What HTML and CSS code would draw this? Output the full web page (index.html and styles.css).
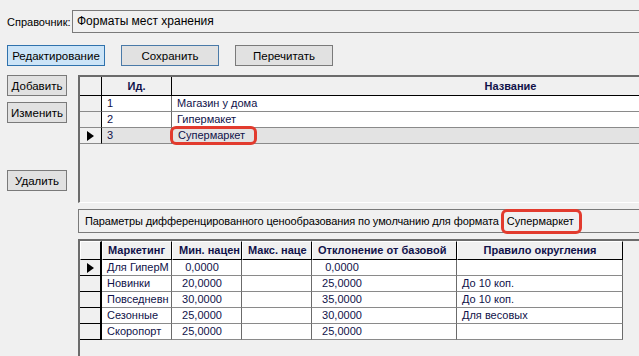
FILE: index.html
```html
<!DOCTYPE html>
<html lang="ru">
<head>
    <meta charset="UTF-8">
    <title>Справочник: Форматы мест хранения</title>
    <link rel="stylesheet" href="styles.css">
</head>
<body>
    <div class="form">
        <div class="ref-row">
            <label class="ref-label">Справочник:</label>
            <div class="ref-box">Форматы мест хранения</div>
        </div>

        <div class="toolbar">
            <button class="btn btn-active">Редактирование</button>
            <button class="btn btn-focus">Сохранить</button>
            <button class="btn">Перечитать</button>
        </div>

        <div class="main">
            <div class="side">
                <button class="btn btn-side">Добавить</button>
                <button class="btn btn-side btn-change">Изменить</button>
                <button class="btn btn-side btn-delete">Удалить</button>
            </div>

            <div class="content">
                <div class="grid grid-formats">
                    <div class="g-row g-head">
                        <div class="c c-ind"></div>
                        <div class="c c-id center">Ид.</div>
                        <div class="c c-name center">Название</div>
                    </div>
                    <div class="g-row">
                        <div class="c c-ind"></div>
                        <div class="c c-id">1</div>
                        <div class="c c-name">Магазин у дома</div>
                    </div>
                    <div class="g-row">
                        <div class="c c-ind"></div>
                        <div class="c c-id">2</div>
                        <div class="c c-name">Гипермакет</div>
                    </div>
                    <div class="g-row selected">
                        <div class="c c-ind">
                            <svg class="arrow" width="7" height="10" viewBox="0 0 7 10"><polygon points="0,0 7,5 0,10"/></svg>
                        </div>
                        <div class="c c-id">3</div>
                        <div class="c c-name"><span class="mark mark-cell">Супермаркет</span></div>
                    </div>
                </div>

                <div class="params">
                    <span class="params-text">Параметры дифференцированного ценообразования по умолчанию для формата</span>
                    <span class="mark mark-inline">Супермаркет</span>
                </div>

                <div class="grid grid-params">
                    <div class="g-row g-head">
                        <div class="c c-ind"></div>
                        <div class="c c-mk">Маркетинг</div>
                        <div class="c c-min">Мин. нацен</div>
                        <div class="c c-max">Макс. наце</div>
                        <div class="c c-dev">Отклонение от базовой</div>
                        <div class="c c-rule center">Правило округления</div>
                    </div>
                    <div class="g-row">
                        <div class="c c-ind">
                            <svg class="arrow" width="7" height="10" viewBox="0 0 7 10"><polygon points="0,0 7,5 0,10"/></svg>
                        </div>
                        <div class="c c-mk">Для ГиперМ</div>
                        <div class="c c-min"><span class="num">0,0000</span></div>
                        <div class="c c-max"></div>
                        <div class="c c-dev"><span class="num">0,0000</span></div>
                        <div class="c c-rule"></div>
                    </div>
                    <div class="g-row">
                        <div class="c c-ind"></div>
                        <div class="c c-mk">Новинки</div>
                        <div class="c c-min"><span class="num">20,0000</span></div>
                        <div class="c c-max"></div>
                        <div class="c c-dev"><span class="num">25,0000</span></div>
                        <div class="c c-rule">До 10 коп.</div>
                    </div>
                    <div class="g-row">
                        <div class="c c-ind"></div>
                        <div class="c c-mk">Повседневн</div>
                        <div class="c c-min"><span class="num">30,0000</span></div>
                        <div class="c c-max"></div>
                        <div class="c c-dev"><span class="num">35,0000</span></div>
                        <div class="c c-rule">До 10 коп.</div>
                    </div>
                    <div class="g-row">
                        <div class="c c-ind"></div>
                        <div class="c c-mk">Сезонные</div>
                        <div class="c c-min"><span class="num">25,0000</span></div>
                        <div class="c c-max"></div>
                        <div class="c c-dev"><span class="num">30,0000</span></div>
                        <div class="c c-rule">Для весовых</div>
                    </div>
                    <div class="g-row">
                        <div class="c c-ind"></div>
                        <div class="c c-mk">Скоропорт</div>
                        <div class="c c-min"><span class="num">25,0000</span></div>
                        <div class="c c-max"></div>
                        <div class="c c-dev"><span class="num">25,0000</span></div>
                        <div class="c c-rule"></div>
                    </div>
                </div>
            </div>
        </div>
    </div>
</body>
</html>
```

FILE: styles.css
```css
html, body {
    margin: 0;
    height: 100%;
    overflow: hidden;
}
body {
    background: #f0f0f0;
    font-family: "Liberation Sans", Arial, sans-serif;
    font-size: 11px;
    color: #000;
}
.form {
    padding-top: 10px;
    overflow: hidden;
}
.ref-row {
    display: flex;
    align-items: center;
    height: 23px;
}
.ref-label {
    width: 72px;
    flex: none;
    padding-left: 7px;
    box-sizing: border-box;
    font-size: 11px;
}
.ref-box {
    flex: 1;
    height: 23px;
    box-sizing: border-box;
    border: 1px solid #7a7a7a;
    border-right: none;
    padding: 3px 4px;
    font-size: 12px;
}
.toolbar {
    display: flex;
    gap: 16px;
    margin-top: 12px;
    padding-left: 7px;
}
.btn {
    width: 98px;
    height: 21px;
    box-sizing: border-box;
    border: 1px solid #7a7a7a;
    background: #e1e1e1;
    font-family: "Liberation Sans", Arial, sans-serif;
    font-size: 11.5px;
    color: #000;
    padding: 0;
}
.btn-active {
    background: #cce4f7;
    border-color: #2f72ad;
}
.btn-focus {
    border-color: #4a7aa8;
}
.main {
    display: flex;
    margin-top: 9px;
}
.side {
    width: 78px;
    flex: none;
    padding-left: 7px;
    box-sizing: border-box;
    display: flex;
    flex-direction: column;
}
.btn-side {
    width: 60px;
}
.btn-change {
    margin-top: 6px;
}
.btn-delete {
    margin-top: 47px;
}
.content {
    flex: 1;
    min-width: 0;
    overflow: hidden;
}

/* grids */
.grid {
    border-top: 2px solid #6b6b6b;
    border-left: 2px solid #6b6b6b;
    background: #f0f0f0;
    color: #10124a;
    overflow: hidden;
}
.grid-formats {
    height: 128px;
    box-sizing: border-box;
    border-bottom: 1px solid #ffffff;
}
.g-row {
    display: flex;
    height: 16px;
}
.c {
    flex: none;
    box-sizing: border-box;
    height: 100%;
    padding-left: 5px;
    line-height: 15px;
    white-space: nowrap;
    overflow: hidden;
    background: #fff;
    border-right: 1px solid #6b6b6b;
    border-bottom: 1px solid #8a8a8a;
}
.center {
    text-align: center;
    padding-left: 0;
}
.g-head {
    height: 19px;
}
.g-head .c {
    background: #f0f0f0;
    font-weight: bold;
    line-height: 18px;
    border-right: 1px solid #000;
    border-bottom: 1px solid #000;
}
.c-ind {
    width: 22px;
    background: #f0f0f0;
    border-right: 1px solid #000;
    padding: 3px 0 0 7px;
}
.arrow {
    display: block;
    fill: #000;
}
.c-id { width: 70px; }
.c-name {
    width: 678px;
    position: relative;
    overflow: visible;
}
.selected .c-id,
.selected .c-name {
    background: #e3e3e3;
}

/* red highlight marks */
.mark {
    border: 3px solid #e23b2e;
    border-radius: 6px;
}
.mark-cell {
    position: absolute;
    left: -2px;
    top: -2px;
    width: 76px;
    height: 13px;
    padding-left: 5px;
    line-height: 13px;
}
.mark-inline {
    display: inline-block;
    padding: 0 5px 0 3px;
    line-height: 19px;
    color: #000;
}

.params {
    height: 24px;
    margin-top: 6px;
    box-sizing: border-box;
    border: 1px solid #7a7a7a;
    border-right: none;
    padding-left: 6px;
    display: flex;
    align-items: center;
    white-space: nowrap;
    gap: 2px;
    font-size: 11px;
}
.params-text {
    letter-spacing: -0.1px;
}

.grid-params {
    margin-top: 6px;
    height: 117px;
}
.grid-params .g-head .c {
    border-top: 1px solid #fff;
    border-left: 1px solid #fff;
    padding-left: 5px;
    line-height: 16px;
}
.grid-params .g-head .center {
    padding-left: 0;
}
.grid-params .c-ind {
    border-right: 2px solid #000;
    border-bottom: 1px solid #000;
}
.grid-params .g-head .c-ind {
    padding: 0;
}
.c-mk { width: 70px; }
.c-min { width: 70px; padding-left: 0; }
.c-max { width: 70px; }
.c-dev { width: 145px; padding-left: 0; }
.grid-params .g-head .c-min { padding-left: 6px; }
.grid-params .g-head .c-dev { padding-left: 5px; }
.c-rule { width: 166px; }
.num {
    display: inline-block;
    width: 60px;
    text-align: center;
}
```
